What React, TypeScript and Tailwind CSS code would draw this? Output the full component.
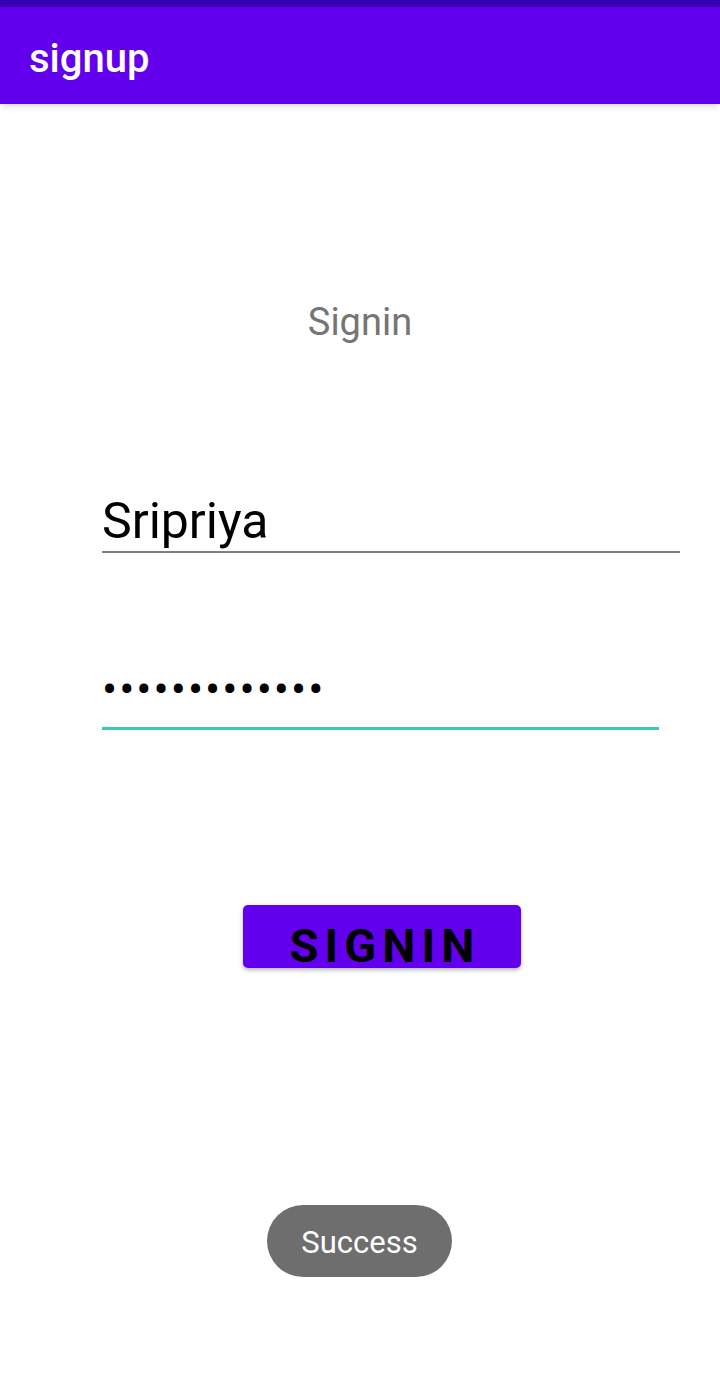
import React from 'react'

export default function App() {
  return (
    <div
      className="relative w-[720px] h-[1382px] bg-white overflow-hidden"
      style={{ fontFamily: 'Roboto, "Noto Sans", sans-serif' }}
    >
      {/* status bar + toolbar */}
      <div className="h-[7px] bg-[#3700b3]" />
      <div className="h-[97px] bg-[#6200ee] flex items-center px-[29px] shadow-md">
        <span className="text-[40px] font-medium text-white leading-none mt-[6px]">signup</span>
      </div>

      <div className="flex flex-col">
        <div className="pt-[199px] text-center text-[38px] text-[#757575] leading-none">Signin</div>

        {/* username */}
        <div className="mt-[155px] ml-[102px] w-[578px]">
          <div className="text-[50px] text-black leading-none pb-[5px]">Sripriya</div>
          <div className="h-[2px] bg-[#808080]" />
        </div>

        {/* password */}
        <div className="mt-[114px] ml-[102px] w-[557px]">
          <div className="text-[45px] text-black leading-none tracking-[2px] pb-[15px]">
            •••••••••••••
          </div>
          <div className="h-[3px] bg-[#3cc6c0]" />
        </div>

        <div className="mt-[175px] flex justify-center">
          <button className="w-[278px] h-[63px] ml-[44px] bg-[#6200ee] rounded-[5px] shadow-[0_2px_4px_rgba(0,0,0,0.3)] flex items-end justify-center pb-[2px]">
            <span className="text-[47px] font-bold text-black tracking-[6px] leading-[40px] ml-[6px]">SIGNIN</span>
          </button>
        </div>
      </div>

      {/* toast */}
      <div className="absolute left-[267px] top-[1205px] w-[185px] h-[72px] rounded-full bg-[#6e6e6e] flex items-center justify-center">
        <span className="text-[31px] text-white leading-none mt-[3px]">Success</span>
      </div>
    </div>
  )
}
